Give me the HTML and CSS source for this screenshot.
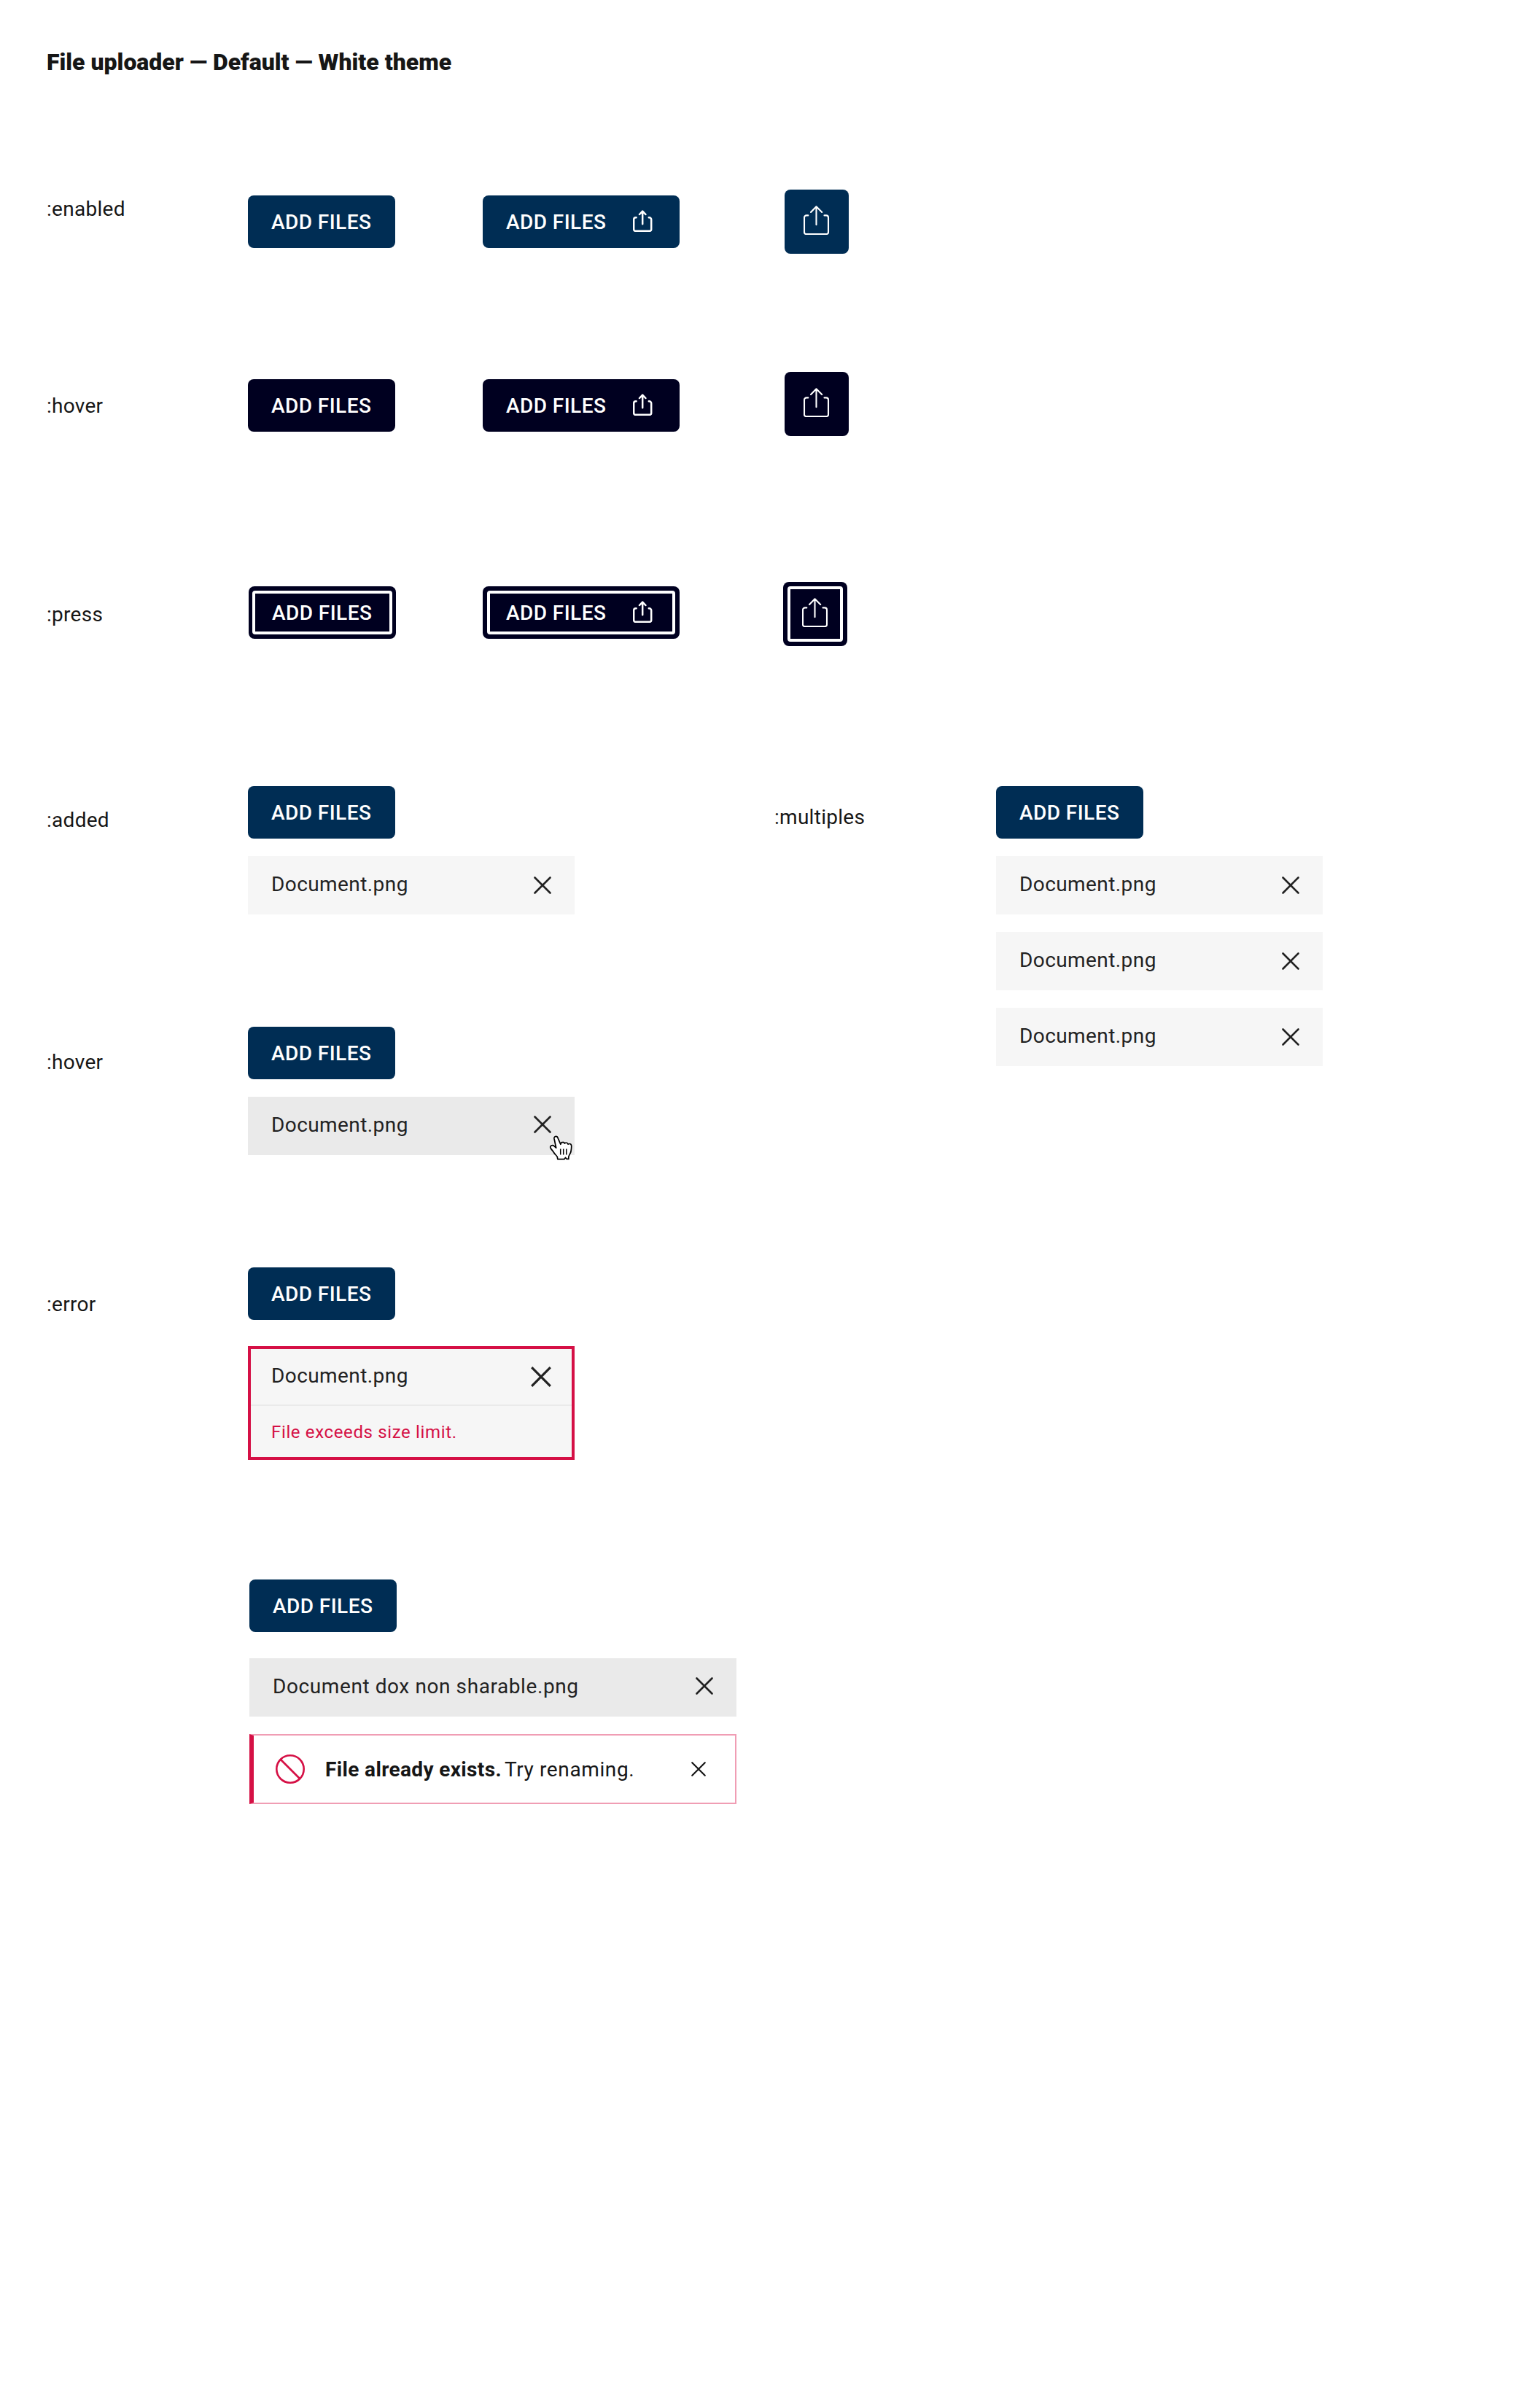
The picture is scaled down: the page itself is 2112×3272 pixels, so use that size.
FILE: index.html
```html
<!DOCTYPE html>
<html lang="en">
<head>
<meta charset="utf-8">
<title>File uploader</title>
<link rel="stylesheet" href="styles.css">
</head>
<body>
<svg class="defs" aria-hidden="true">
  <symbol id="share-sm" viewBox="0 0 27 30">
    <path d="M4.600 10.200H4a2.800 2.800 0 0 0-2.800 2.800v13.600a2.200 2.200 0 0 0 2.200 2.200h19.600a2.200 2.200 0 0 0 2.200-2.200V13a2.800 2.800 0 0 0-2.800-2.800h-.6M13.200 19.200V2M9 6l4.200-4.400L17.400 6" fill="none" stroke="currentColor" stroke-width="2.500" stroke-linecap="round" stroke-linejoin="round"/>
  </symbol>
  <symbol id="share-lg" viewBox="0 0 36 40">
    <path d="M6.300 13.400H4a3 3 0 0 0-3 3v20.200a2.400 2.400 0 0 0 2.400 2.400h28.200a2.400 2.400 0 0 0 2.400-2.400V16.400a3 3 0 0 0-3-3h-2.500M17.500 26.300V1.500M10 9l7.500-7.700L25.200 9" fill="none" stroke="currentColor" stroke-width="2.100" stroke-linecap="round" stroke-linejoin="round"/>
  </symbol>
  <symbol id="close" viewBox="0 0 24 24">
    <path d="M1.500 1.500l21 21M22.500 1.500l-21 21" fill="none" stroke="currentColor" stroke-width="2.600" stroke-linecap="round"/>
  </symbol>
</svg>
<main class="sheet">
  <h1 class="title">File uploader — Default — White theme</h1>

  <section class="row row-enabled">
    <p class="label">:enabled</p>
    <button class="btn">ADD FILES</button>
    <button class="btn btn-with-icon">ADD FILES<svg class="share-sm"><use href="#share-sm"/></svg></button>
    <button class="btn btn-icon"><svg class="share-lg"><use href="#share-lg"/></svg></button>
  </section>

  <section class="row row-hover">
    <p class="label">:hover</p>
    <button class="btn is-dark">ADD FILES</button>
    <button class="btn btn-with-icon is-dark">ADD FILES<svg class="share-sm"><use href="#share-sm"/></svg></button>
    <button class="btn btn-icon is-dark"><svg class="share-lg"><use href="#share-lg"/></svg></button>
  </section>

  <section class="row row-press">
    <p class="label">:press</p>
    <button class="btn is-dark is-pressed">ADD FILES</button>
    <button class="btn btn-with-icon is-dark is-pressed">ADD FILES<svg class="share-sm"><use href="#share-sm"/></svg></button>
    <button class="btn btn-icon is-dark is-pressed"><svg class="share-lg"><use href="#share-lg"/></svg></button>
  </section>

  <div class="columns">
    <div class="states">
      <section class="state state-added">
        <p class="label">:added</p>
        <div class="uploader">
          <button class="btn">ADD FILES</button>
          <div class="file">Document.png<svg class="close"><use href="#close"/></svg></div>
        </div>
      </section>

      <section class="state state-hover">
        <p class="label">:hover</p>
        <div class="uploader">
          <button class="btn">ADD FILES</button>
          <div class="file is-hovered">Document.png<svg class="close"><use href="#close"/></svg>
            <svg class="pointer" viewBox="0 0 33 35"><path d="M9.300 1.300C7.500 1.500 6.700 2.900 7 4.500l2.700 12.700-2.500-2.400c-1.300-1.200-3.300-1.300-4.600-.4-1 .8-1 2.200-.3 3.300 1.200 2 3 3.600 4.400 6 1.500 2.500 3.600 3.800 4.600 5.800l.5 3.200h9l1.700-2.200 1.700 1.900h2.600c0-1.500-.2-2.500.3-3.900 1-2.600 2.500-4.200 2.900-6.500.4-2.700.9-5.100.7-7.700-.2-1.700-1.300-3-2.900-2.800-.6 0-1.200.2-1.700.6-.5-1.500-1.400-2.200-2.600-2.100-.9 0-1.500.4-2 1-.6-1.200-1.500-1.800-2.700-1.700-1.800 0-2.800 1.300-2.900 3L12.200 3.800c-.4-1.600-1.300-2.600-2.900-2.500z" fill="#fff" stroke="#000" stroke-width="1.700" stroke-linejoin="round"/><path d="M15.700 18.500v8M19.700 18.500v8M23.800 18.500v8" stroke="#000" stroke-width="1.500"/></svg>
          </div>
        </div>
      </section>

      <section class="state state-error">
        <p class="label">:error</p>
        <div class="uploader uploader-spaced">
          <button class="btn">ADD FILES</button>
          <div class="file-error">
            <div class="file-error-name">Document.png<svg class="close-lg" viewBox="0 0 28 28"><path d="M1.200 1.200l25.600 25.600M26.800 1.200L1.200 26.800" fill="none" stroke="currentColor" stroke-width="3.200"/></svg></div>
            <div class="file-error-message">File exceeds size limit.</div>
          </div>
        </div>
      </section>

      <section class="state state-duplicate">
        <div class="uploader uploader-spaced">
          <button class="btn">ADD FILES</button>
          <div class="file file-wide is-hovered">Document dox non sharable.png<svg class="close"><use href="#close"/></svg></div>
        </div>
        <div class="notice">
          <svg class="ban" viewBox="0 0 40 40"><circle cx="20" cy="20" r="18.700" fill="none" stroke="currentColor" stroke-width="2.600"/><path d="M7 7l26 26" stroke="currentColor" stroke-width="2.600"/></svg>
          <p class="notice-text"><strong>File already exists.</strong><span>Try renaming.</span></p>
          <svg class="close-sm"><use href="#close"/></svg>
        </div>
      </section>
    </div>

    <section class="state state-multiples">
      <p class="label">:multiples</p>
      <div class="uploader">
        <button class="btn">ADD FILES</button>
        <div class="file">Document.png<svg class="close"><use href="#close"/></svg></div>
        <div class="file">Document.png<svg class="close"><use href="#close"/></svg></div>
        <div class="file">Document.png<svg class="close"><use href="#close"/></svg></div>
      </div>
    </section>
  </div>
</main>
</body>
</html>
```
FILE: styles.css
```css
* { box-sizing: border-box; margin: 0; }
body { background: #fff; color: #161616; font: 400 28px/40px Roboto, sans-serif; }
svg { display: block; flex: none; }
.defs { width: 0; height: 0; position: absolute; }
.sheet { width: 2112px; height: 3272px; padding: 64px 64px 0; }
.title { font-size: 32px; line-height: 42px; font-weight: 900; height: 42px; }
.label { letter-spacing: .28px; }

.row { display: grid; grid-template-columns: 276px 322px 414px auto; align-items: center; height: 88px; }
.row .label { align-self: start; }
.row-enabled { margin-top: 154px; }
.row-enabled .label { padding-top: 7px; }
.row-hover { margin-top: 162px; align-items: start; }
.row-hover .btn { margin-top: 10px; }
.row-hover .btn-icon { margin-top: 0; }
.row-hover .label { padding-top: 27px; }
.row-press { grid-template-columns: 277px 321px 412px auto; margin-top: 200px; align-items: start; }
.row-press .btn { margin-top: 6px; }
.row-press .btn-icon { margin-top: 0; }
.row-press .label { padding-top: 25px; }

.btn { display: flex; align-items: center; justify-content: flex-start; width: 202px; height: 72px; padding: 2px 32px 0; border: 0; border-radius: 8px; background: #002d54; color: #fff; font: 500 28px/40px Roboto, sans-serif; letter-spacing: .44px; white-space: nowrap; }
.btn-with-icon { width: 270px; justify-content: space-between; padding-right: 37px; }
.btn-icon { width: 88px; height: 88px; padding: 0; justify-content: center; }
.is-dark { background: #000020; }
.is-pressed { position: relative; }
.is-pressed::after { content: ""; position: absolute; inset: 6px 5px; border: 4px solid #fff; border-radius: 4px; }
.btn-with-icon.is-pressed::after, .btn-icon.is-pressed::after { inset: 6px; }
.share-sm { width: 27px; height: 30px; margin-top: -4px; }
.share-lg { width: 36px; height: 40px; margin-top: -4px; }

.columns { display: flex; margin-top: 192px; }
.states { width: 998px; }
.state { display: flex; }
.state .label { width: 276px; }
.uploader { display: flex; flex-direction: column; gap: 24px; }
.uploader-spaced { gap: 36px; }
.state-added .label { padding-top: 27px; }
.state-hover { margin-top: 154px; }
.state-hover .label { padding-top: 29px; }
.state-error { margin-top: 154px; }
.state-error .label { padding-top: 31px; }
.state-duplicate { flex-direction: column; gap: 24px; margin: 164px 0 0 278px; width: 668px; }
.state-multiples .label { width: 304px; padding-top: 23px; }

.file { position: relative; display: flex; justify-content: space-between; width: 448px; height: 80px; padding: 19px 32px 0; background: #f6f6f6; color: #222; letter-spacing: .42px; }
.file-wide { width: 668px; letter-spacing: .59px; }
.is-hovered { background: #eaeaea; }
.close { width: 24px; height: 24px; margin-top: 9px; }
.is-hovered .close { margin-top: 7px; }
.pointer { position: absolute; left: 413px; top: 53px; width: 33px; height: 35px; }

.file-error { width: 448px; height: 156px; border: 4px solid #d51045; background: #f6f6f6; color: #222; }
.file-error-name { display: flex; justify-content: space-between; height: 78px; padding: 17px 28px 0; border-bottom: 2px solid #eaeaea; letter-spacing: .42px; }
.close-lg { width: 28px; height: 28px; margin-top: 7px; }
.file-error-message { padding: 20px 28px 0; color: #d51045; font-size: 24px; line-height: 32px; letter-spacing: .64px; }

.notice { display: flex; align-items: center; height: 96px; padding: 0 40px 0 30px; border: 2px solid #f09db4; border-left: 6px solid #d51045; }
.ban { width: 40px; height: 40px; color: #d51045; }
.notice-text { display: flex; flex: 1; gap: 4px; margin-left: 28px; padding-top: 1px; letter-spacing: .36px; }
.notice-text span { letter-spacing: .62px; }
.close-sm { width: 20px; height: 20px; }
```
